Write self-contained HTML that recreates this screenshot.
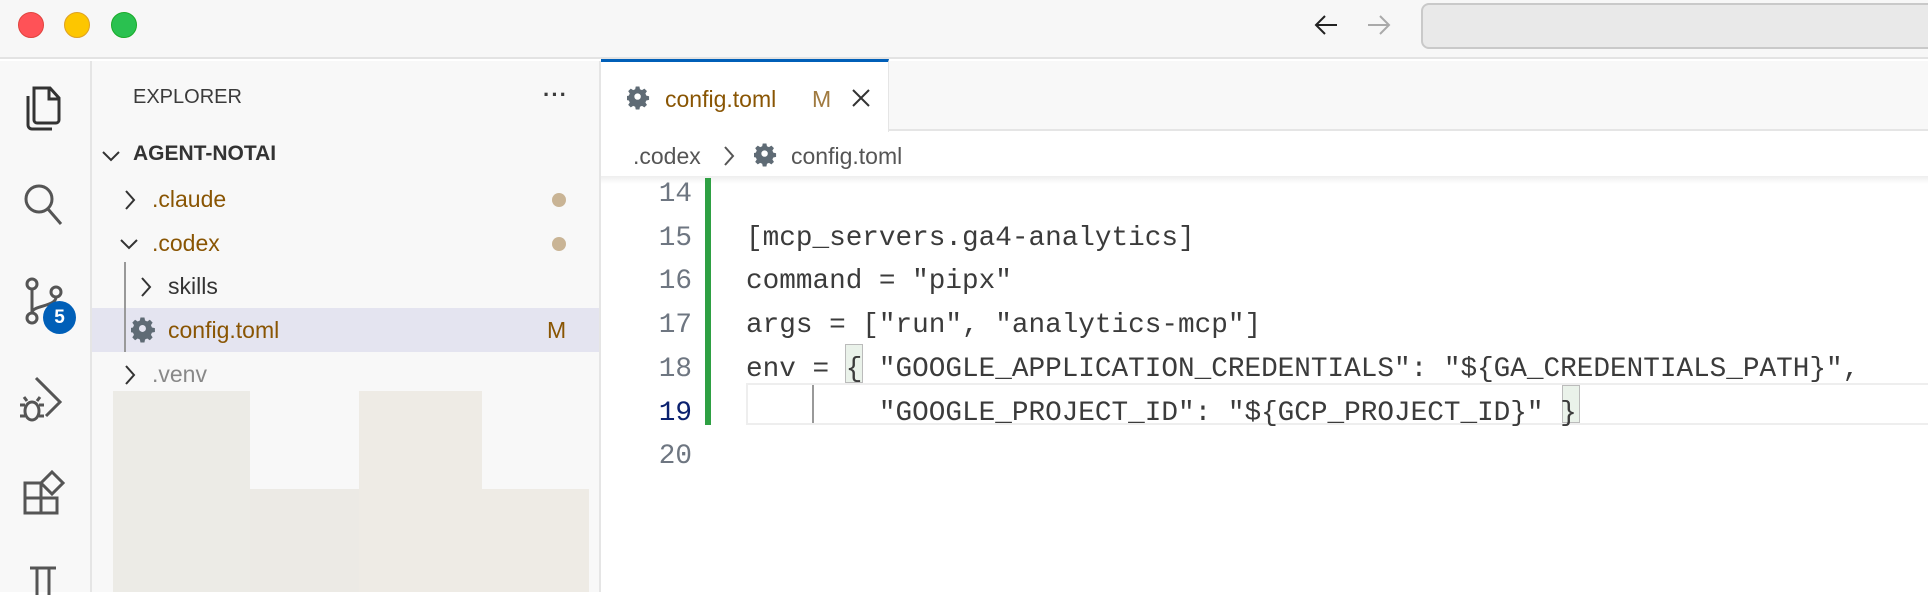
<!DOCTYPE html>
<html><head><meta charset="utf-8"><style>
*{margin:0;padding:0;box-sizing:border-box}
body{width:1928px;height:592px;overflow:hidden;background:#fff;position:relative;font-family:"Liberation Sans",sans-serif;color:#3b3b3b}
.a{position:absolute}
.mono{font-family:"Liberation Mono","DejaVu Sans Mono",monospace;font-size:27.7px;white-space:pre;line-height:43.7px}
.sb{font-size:23px}
</style></head><body>
<!-- title bar -->
<div class="a" style="left:0;top:0;width:1928px;height:59px;background:#f7f7f7;border-bottom:2px solid #e3e3e3"></div>
<div class="a" style="left:18px;top:12px;width:26px;height:26px;border-radius:50%;background:#ff5257;border:1px solid #e0443e"></div>
<div class="a" style="left:64px;top:12px;width:26px;height:26px;border-radius:50%;background:#fdc600;border:1px solid #dea123"></div>
<div class="a" style="left:111px;top:12px;width:26px;height:26px;border-radius:50%;background:#2ac150;border:1px solid #1aab29"></div>
<svg class="a" style="left:1312px;top:13px" width="28" height="24" viewBox="0 0 28 24"><path d="M25 12H4M13 3L4 12l9 9" fill="none" stroke="#222" stroke-width="2"/></svg>
<svg class="a" style="left:1365px;top:13px" width="28" height="24" viewBox="0 0 28 24"><path d="M3 12h21M15 3l9 9-9 9" fill="none" stroke="#aaa" stroke-width="2"/></svg>
<div class="a" style="left:1421px;top:3px;width:520px;height:46px;border-radius:8px;background:#e9e9e9;border:2px solid #c9c9c9"></div>
<!-- activity bar -->
<div class="a" style="left:0;top:61px;width:92px;height:531px;background:#f8f8f8;border-right:2px solid #e5e5e5"></div>
<svg class="a" style="left:22px;top:84px" width="40" height="48" viewBox="0 0 40 48" fill="none" stroke="#333" stroke-width="3"><path d="M12 4h16l9 10v22a3 3 0 0 1-3 3H15a3 3 0 0 1-3-3z"/><path d="M27 4v11h10"/><path d="M6 12v29a4 4 0 0 0 4 4h20"/></svg>
<svg class="a" style="left:22px;top:182px" width="44" height="48" viewBox="0 0 44 48" fill="none" stroke="#555" stroke-width="3"><circle cx="17" cy="17" r="13"/><path d="M26 27l13 15"/></svg>
<svg class="a" style="left:22px;top:276px" width="44" height="50" viewBox="0 0 44 50" fill="none" stroke="#555" stroke-width="3"><circle cx="10" cy="8" r="5"/><circle cx="10" cy="42" r="5"/><circle cx="34" cy="16" r="5"/><path d="M10 13v24M34 21c0 10-24 8-24 16"/></svg>
<div class="a" style="left:43px;top:301px;width:33px;height:33px;border-radius:50%;background:#005fb8;color:#fff;font-weight:bold;font-size:19px;text-align:center;line-height:33px">5</div>
<svg class="a" style="left:18px;top:374px" width="48" height="50" viewBox="0 0 48 50" fill="none" stroke="#555" stroke-width="3"><path d="M18 4l24 24-14 14"/><ellipse cx="14" cy="37" rx="7" ry="9"/><path d="M2 31h5M2 42h5M21 31h5M21 42h5M9 27l-3-4M19 27l3-4"/></svg>
<svg class="a" style="left:22px;top:470px" width="44" height="46" viewBox="0 0 44 46" fill="none" stroke="#555" stroke-width="3"><path d="M3 13h16v30H3zM3 28h32v15H19M19 28V13"/><path d="M30 2l11 11-11 11-11-11z"/></svg>
<svg class="a" style="left:26px;top:565px" width="34" height="30" viewBox="0 0 34 30" fill="none" stroke="#555" stroke-width="3"><path d="M4 3h26M11 3v30M23 3v30"/></svg>
<!-- sidebar -->
<div class="a" style="left:92px;top:61px;width:509px;height:531px;background:#f8f8f8;border-right:2px solid #e5e5e5"></div>
<div class="a sb" style="left:133px;top:86px;font-size:20px;color:#3b3b3b">EXPLORER</div>
<div class="a" style="left:543px;top:82px;font-size:22px;font-weight:bold;letter-spacing:1px">···</div>
<svg class="a" style="left:100px;top:148px" width="22" height="16" viewBox="0 0 22 16"><path d="M3 4l8 8 8-8" fill="none" stroke="#333" stroke-width="2"/></svg>
<div class="a" style="left:133px;top:142px;font-size:21px;font-weight:bold;color:#333">AGENT-NOTAI</div>
<svg class="a" style="left:122px;top:188px" width="16" height="24" viewBox="0 0 16 24"><path d="M4 3l8 9-8 9" fill="none" stroke="#333" stroke-width="2"/></svg>
<div class="a sb" style="left:152px;top:186px;color:#895503">.claude</div>
<div class="a" style="left:552px;top:193px;width:14px;height:14px;border-radius:50%;background:#c9b495"></div>
<svg class="a" style="left:118px;top:236px" width="22" height="16" viewBox="0 0 22 16"><path d="M3 4l8 8 8-8" fill="none" stroke="#333" stroke-width="2"/></svg>
<div class="a sb" style="left:152px;top:230px;color:#895503">.codex</div>
<div class="a" style="left:552px;top:237px;width:14px;height:14px;border-radius:50%;background:#c9b495"></div>
<div class="a" style="left:92px;top:308px;width:507px;height:44px;background:#e4e4f0"></div>
<div class="a" style="left:124px;top:262px;width:2px;height:90px;background:#999"></div>
<svg class="a" style="left:138px;top:275px" width="16" height="24" viewBox="0 0 16 24"><path d="M4 3l8 9-8 9" fill="none" stroke="#333" stroke-width="2"/></svg>
<div class="a sb" style="left:168px;top:273px;color:#333">skills</div>
<svg class="a" style="left:131px;top:317px" width="26" height="26" viewBox="0 0 24 24"><path fill="#5f6b75" d="M10 1h4l.6 3 2.2 1 2.6-1.7 2.8 2.8L20.5 8.7l1 2.3 3 .6v4l-3 .6-1 2.2 1.7 2.6-2.8 2.8-2.6-1.7-2.2 1-.6 3h-4l-.6-3-2.2-1-2.6 1.7-2.8-2.8 1.7-2.6-1-2.2-3-.6v-4l3-.6 1-2.3L1.8 6.1l2.8-2.8L7.2 5l2.2-1zM12 8.5a3.5 3.5 0 1 0 0 7 3.5 3.5 0 0 0 0-7z" transform="scale(.92) translate(-.5 -.5)"/></svg>
<div class="a sb" style="left:168px;top:317px;color:#895503">config.toml</div>
<div class="a sb" style="left:547px;top:317px;color:#895503">M</div>
<svg class="a" style="left:122px;top:363px" width="16" height="24" viewBox="0 0 16 24"><path d="M4 3l8 9-8 9" fill="none" stroke="#333" stroke-width="2"/></svg>
<div class="a sb" style="left:152px;top:361px;color:#888">.venv</div>
<div class="a" style="left:113px;top:391px;width:137px;height:201px;background:#ecebe6"></div>
<div class="a" style="left:250px;top:489px;width:109px;height:103px;background:#eceae5"></div>
<div class="a" style="left:359px;top:391px;width:123px;height:201px;background:#eeebe5"></div>
<div class="a" style="left:482px;top:489px;width:107px;height:103px;background:#eeebe5"></div>
<!-- tab bar -->
<div class="a" style="left:601px;top:61px;width:1327px;height:70px;background:#f8f8f8;border-bottom:2px solid #e5e5e5"></div>
<div class="a" style="left:601px;top:59px;width:288px;height:73px;background:#fff;border-top:3px solid #005fb8;border-right:1px solid #e5e5e5"></div>
<svg class="a" style="left:627px;top:86px" width="24" height="24" viewBox="0 0 24 24"><path fill="#5f6b75" d="M10 1h4l.6 3 2.2 1 2.6-1.7 2.8 2.8L20.5 8.7l1 2.3 3 .6v4l-3 .6-1 2.2 1.7 2.6-2.8 2.8-2.6-1.7-2.2 1-.6 3h-4l-.6-3-2.2-1-2.6 1.7-2.8-2.8 1.7-2.6-1-2.2-3-.6v-4l3-.6 1-2.3L1.8 6.1l2.8-2.8L7.2 5l2.2-1zM12 8.5a3.5 3.5 0 1 0 0 7 3.5 3.5 0 0 0 0-7z" transform="scale(.92) translate(-.5 -.5)"/></svg>
<div class="a sb" style="left:665px;top:86px;color:#895503">config.toml</div>
<div class="a sb" style="left:812px;top:86px;color:#a07a40">M</div>
<svg class="a" style="left:851px;top:88px" width="20" height="20" viewBox="0 0 20 20"><path d="M2 2l16 16M18 2L2 18" stroke="#333" stroke-width="2"/></svg>
<!-- breadcrumbs -->
<div class="a sb" style="left:633px;top:143px;color:#555">.codex</div>
<svg class="a" style="left:722px;top:143px" width="14" height="26" viewBox="0 0 14 26"><path d="M3 4l8 9-8 9" fill="none" stroke="#555" stroke-width="2"/></svg>
<svg class="a" style="left:754px;top:143px" width="24" height="24" viewBox="0 0 24 24"><path fill="#5f6b75" d="M10 1h4l.6 3 2.2 1 2.6-1.7 2.8 2.8L20.5 8.7l1 2.3 3 .6v4l-3 .6-1 2.2 1.7 2.6-2.8 2.8-2.6-1.7-2.2 1-.6 3h-4l-.6-3-2.2-1-2.6 1.7-2.8-2.8 1.7-2.6-1-2.2-3-.6v-4l3-.6 1-2.3L1.8 6.1l2.8-2.8L7.2 5l2.2-1zM12 8.5a3.5 3.5 0 1 0 0 7 3.5 3.5 0 0 0 0-7z" transform="scale(.92) translate(-.5 -.5)"/></svg>
<div class="a sb" style="left:791px;top:143px;color:#555">config.toml</div>
<div class="a" style="left:601px;top:176px;width:1327px;height:8px;background:linear-gradient(#eee,#fff)"></div>
<!-- editor -->
<div class="a" style="left:705px;top:178px;width:6px;height:247px;background:#2ea043"></div>
<div class="a" style="left:746px;top:383px;width:1182px;height:42px;border-top:2px solid #eee;border-bottom:2px solid #eee;border-left:2px solid #eee"></div>
<div class="a" style="left:812px;top:385px;width:2px;height:38px;background:#999"></div>
<div class="a" style="left:845px;top:344px;width:18px;height:39px;border:1.5px solid #bbb;background:#eaf2ea"></div>
<div class="a" style="left:1562px;top:385px;width:18px;height:38px;border:1.5px solid #bbb;background:#eaf2ea"></div>
<div class="a mono" style="left:600px;top:173px;width:92px;text-align:right;color:#6e7681">14
15
16
17
18
<span style="color:#0b216f">19</span>
20</div>
<div class="a mono" style="left:746px;top:173px;color:#3b3b3b">
[mcp_servers.ga4-analytics]
command = "pipx"
args = ["run", "analytics-mcp"]
env = { "GOOGLE_APPLICATION_CREDENTIALS": "${GA_CREDENTIALS_PATH}",
        "GOOGLE_PROJECT_ID": "${GCP_PROJECT_ID}" }</div>
</body></html>
